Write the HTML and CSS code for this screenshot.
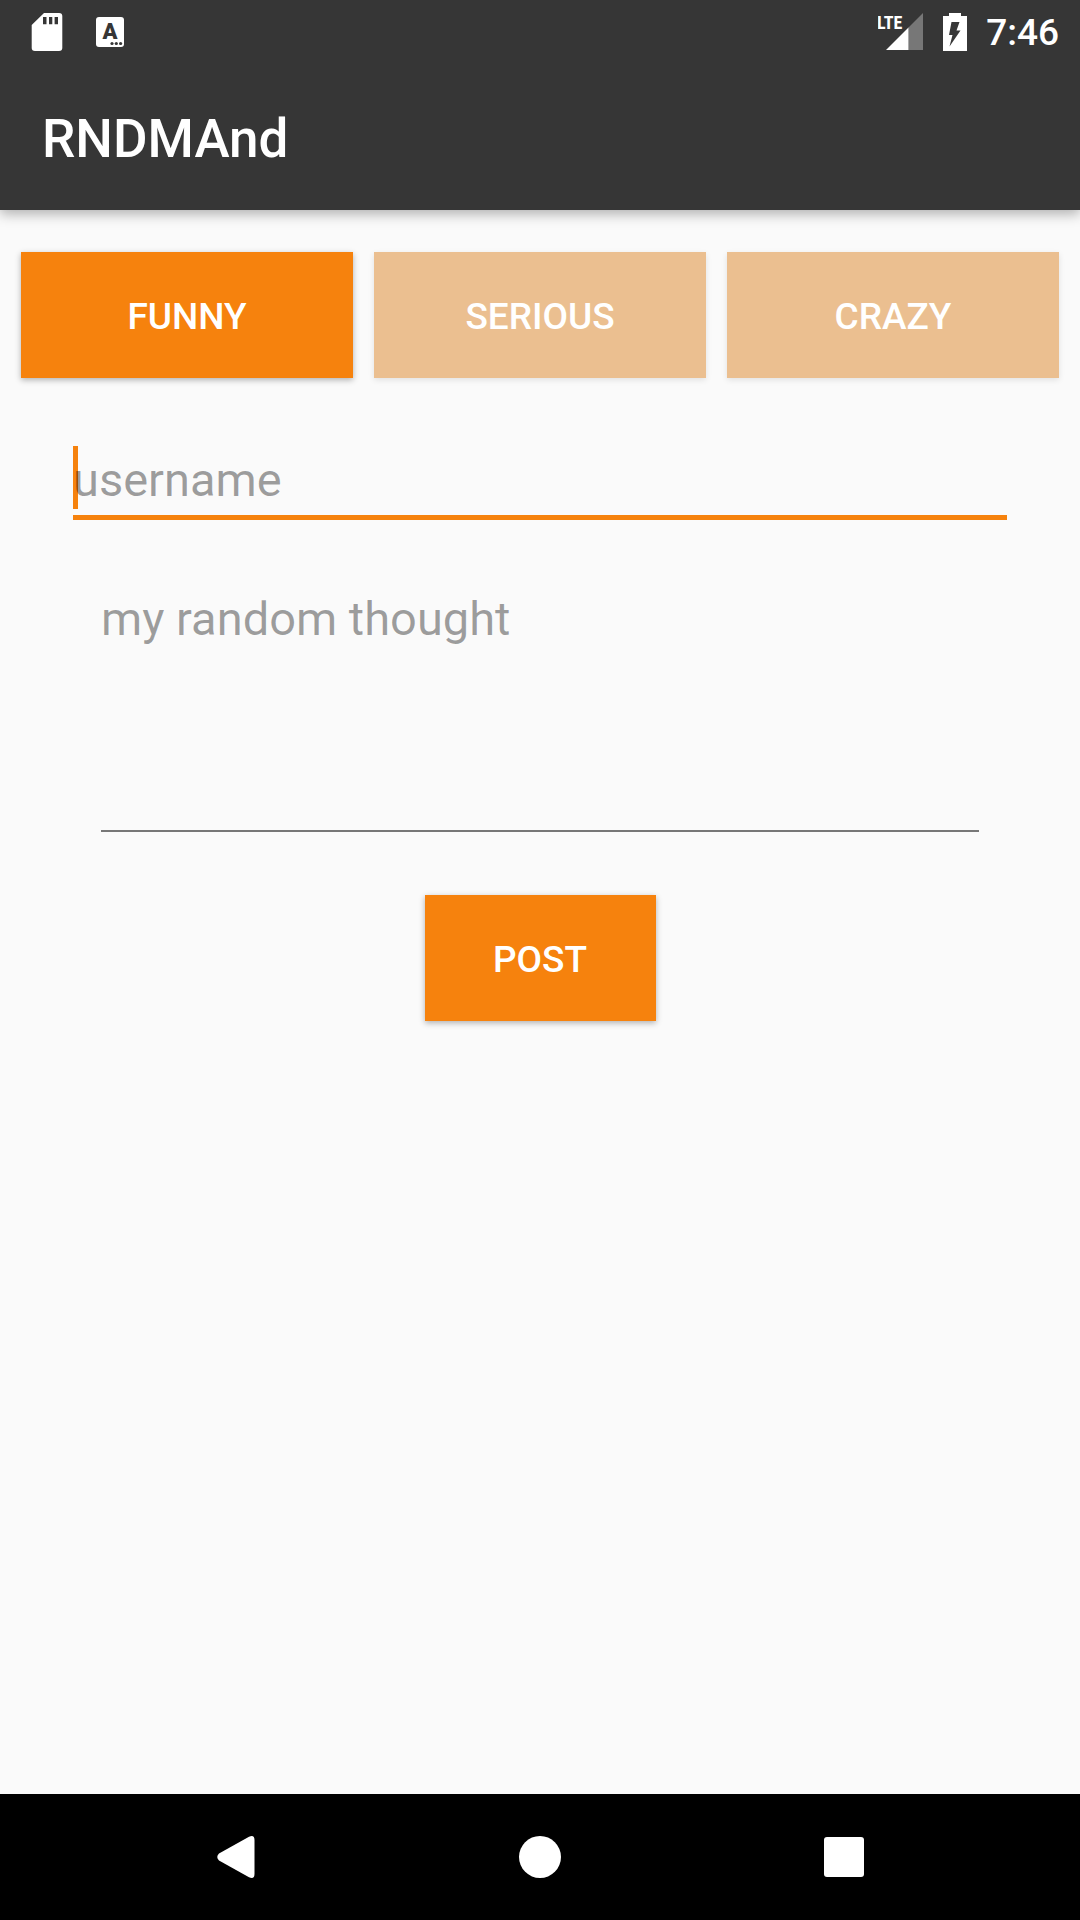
FILE: index.html
```html
<!DOCTYPE html>
<html lang="en">
<head>
  <meta charset="utf-8">
  <meta name="viewport" content="width=device-width, initial-scale=1">
  <title>RNDMAnd</title>
  <link rel="stylesheet" href="styles.css">
</head>
<body>
  <header class="app-header">
    <div class="status-bar">
      <div class="status-left">
        <svg class="icon-card" width="32" height="40" viewBox="0 0 32 40" aria-hidden="true">
          <path fill="#fff" fill-rule="evenodd" d="M13 1H28Q31.300 1 31.300 4V36Q31.300 39 28 39H4Q.7 39 .7 36V13ZM12 5V12.300H15.500V5ZM18 5V12.300H21.300V5ZM23.600 5V12.300H27V5Z"/>
        </svg>
        <svg class="icon-keyboard" width="30" height="32" viewBox="0 0 30 32" aria-hidden="true">
          <rect x="1" y="1" width="28" height="30" rx="3" fill="#fff"/>
          <text x="15" y="23" text-anchor="middle" class="icon-letter">A</text>
          <g fill="#363636"><circle cx="17" cy="27.500" r="1.600"/><circle cx="21.300" cy="27.500" r="1.600"/><circle cx="25.600" cy="27.500" r="1.600"/></g>
        </svg>
      </div>
      <div class="status-right">
        <svg width="46" height="38" viewBox="0 0 46 38" aria-hidden="true">
          <path fill="#777" d="M45 0V37H30.500V14.500Z"/>
          <path fill="#fff" d="M30.500 14.500V37H8Z"/>
          <text x="-1" y="16" class="icon-lte">LTE</text>
        </svg>
        <svg width="24" height="38" viewBox="0 0 24 38" aria-hidden="true">
          <path fill="#fff" d="M6 0H18V3H24V38H0V3H6Z"/>
          <path fill="#363636" d="M8.500 9H16.500L13.500 17.500H17.500L6.500 33.500L9.500 22H6Z"/>
        </svg>
        <span class="clock">7:46</span>
      </div>
    </div>
    <h1 class="title">RNDMAnd</h1>
  </header>

  <main class="content">
    <div class="categories">
      <button type="button" class="btn">FUNNY</button>
      <button type="button" class="btn btn-faded">SERIOUS</button>
      <button type="button" class="btn btn-faded">CRAZY</button>
    </div>
    <form class="thought-form">
      <div class="field">
        <span class="caret"></span>
        <input class="username" type="text" placeholder="username" aria-label="username">
      </div>
      <textarea class="thought" placeholder="my random thought" aria-label="my random thought"></textarea>
      <button type="button" class="btn btn-post">POST</button>
    </form>
  </main>

  <nav class="nav-bar">
    <button type="button" class="nav-btn" aria-label="Back">
      <svg width="42" height="42" viewBox="0 0 42 42"><path fill="#fff" d="M4 17.500L34 .8Q39.500-1.500 39.500 4V38Q39.500 43.500 34 41.200L4 24.500Q.5 21 4 17.500Z"/></svg>
    </button>
    <button type="button" class="nav-btn" aria-label="Home">
      <svg width="42" height="42" viewBox="0 0 42 42"><circle cx="21" cy="21" r="21" fill="#fff"/></svg>
    </button>
    <button type="button" class="nav-btn" aria-label="Recent apps">
      <svg width="42" height="42" viewBox="0 0 42 42"><rect x="1" y="1" width="40" height="40" rx="3" fill="#fff"/></svg>
    </button>
  </nav>
</body>
</html>
```
FILE: styles.css
```css
* {
  box-sizing: border-box;
}

body {
  margin: 0;
  min-height: 100vh;
  display: flex;
  flex-direction: column;
  background: #fafafa;
  font-family: Roboto, "Liberation Sans", sans-serif;
}

svg {
  display: block;
}

.app-header {
  background: #363636;
  color: #fff;
  box-shadow: 0 4px 12px rgba(0, 0, 0, 0.3);
}

.status-bar {
  height: 63px;
  padding: 0 21px 0 31px;
  display: flex;
  align-items: center;
  justify-content: space-between;
}

.status-left,
.status-right {
  display: flex;
  align-items: center;
}

.status-left {
  gap: 32px;
}

.status-right {
  gap: 19px;
}

.icon-letter {
  font: 900 22px Roboto, sans-serif;
  fill: #363636;
}

.icon-lte {
  font: 700 18px "Liberation Sans Narrow", "Roboto Condensed", Roboto, sans-serif;
  fill: #fff;
}

.clock {
  padding-top: 2px;
  font-size: 37px;
  font-weight: 500;
  line-height: 60px;
}

.title {
  margin: 0;
  padding: 6px 42px 0;
  font-size: 53px;
  font-weight: 500;
  line-height: 141px;
}

.content {
  flex: 1;
  padding: 42px 21px;
}

.categories {
  display: grid;
  grid-template-columns: repeat(3, 1fr);
  gap: 21px;
}

.btn {
  height: 126px;
  border: 0;
  padding: 2px 0 0;
  background: #f6820d;
  color: #fff;
  font: 500 37px Roboto, "Liberation Sans", sans-serif;
  box-shadow: 0 2px 6px rgba(0, 0, 0, 0.3);
}

.btn-faded {
  background: #ebbf90;
  box-shadow: 0 2px 6px rgba(0, 0, 0, 0.1);
}

.thought-form {
  padding: 68px 52px 0;
  display: flex;
  flex-direction: column;
}

.field {
  position: relative;
  display: flex;
}

.caret {
  position: absolute;
  left: 0;
  top: 0;
  width: 5px;
  height: 63px;
  background: #f6820d;
}

.username,
.thought {
  border: 0;
  border-radius: 0;
  padding: 0;
  outline: 0;
  background: transparent;
  color: #222;
  font: 47px Roboto, "Liberation Sans", sans-serif;
}

.username {
  position: relative;
  width: 100%;
  height: 74px;
  padding-bottom: 2px;
  border-bottom: 5px solid #f6820d;
}

.thought {
  height: 241px;
  margin: 71px 28px 63px;
  border-bottom: 2px solid #777;
  line-height: 56px;
  resize: none;
}

.username::placeholder,
.thought::placeholder {
  color: rgba(0, 0, 0, 0.38);
  opacity: 1;
}

.btn-post {
  width: 231px;
  align-self: center;
}

.nav-bar {
  height: 126px;
  padding: 0 84px;
  background: #000;
  display: grid;
  grid-template-columns: repeat(3, 1fr);
}

.nav-btn {
  border: 0;
  padding: 0;
  background: transparent;
  display: flex;
  align-items: center;
  justify-content: center;
}
```
